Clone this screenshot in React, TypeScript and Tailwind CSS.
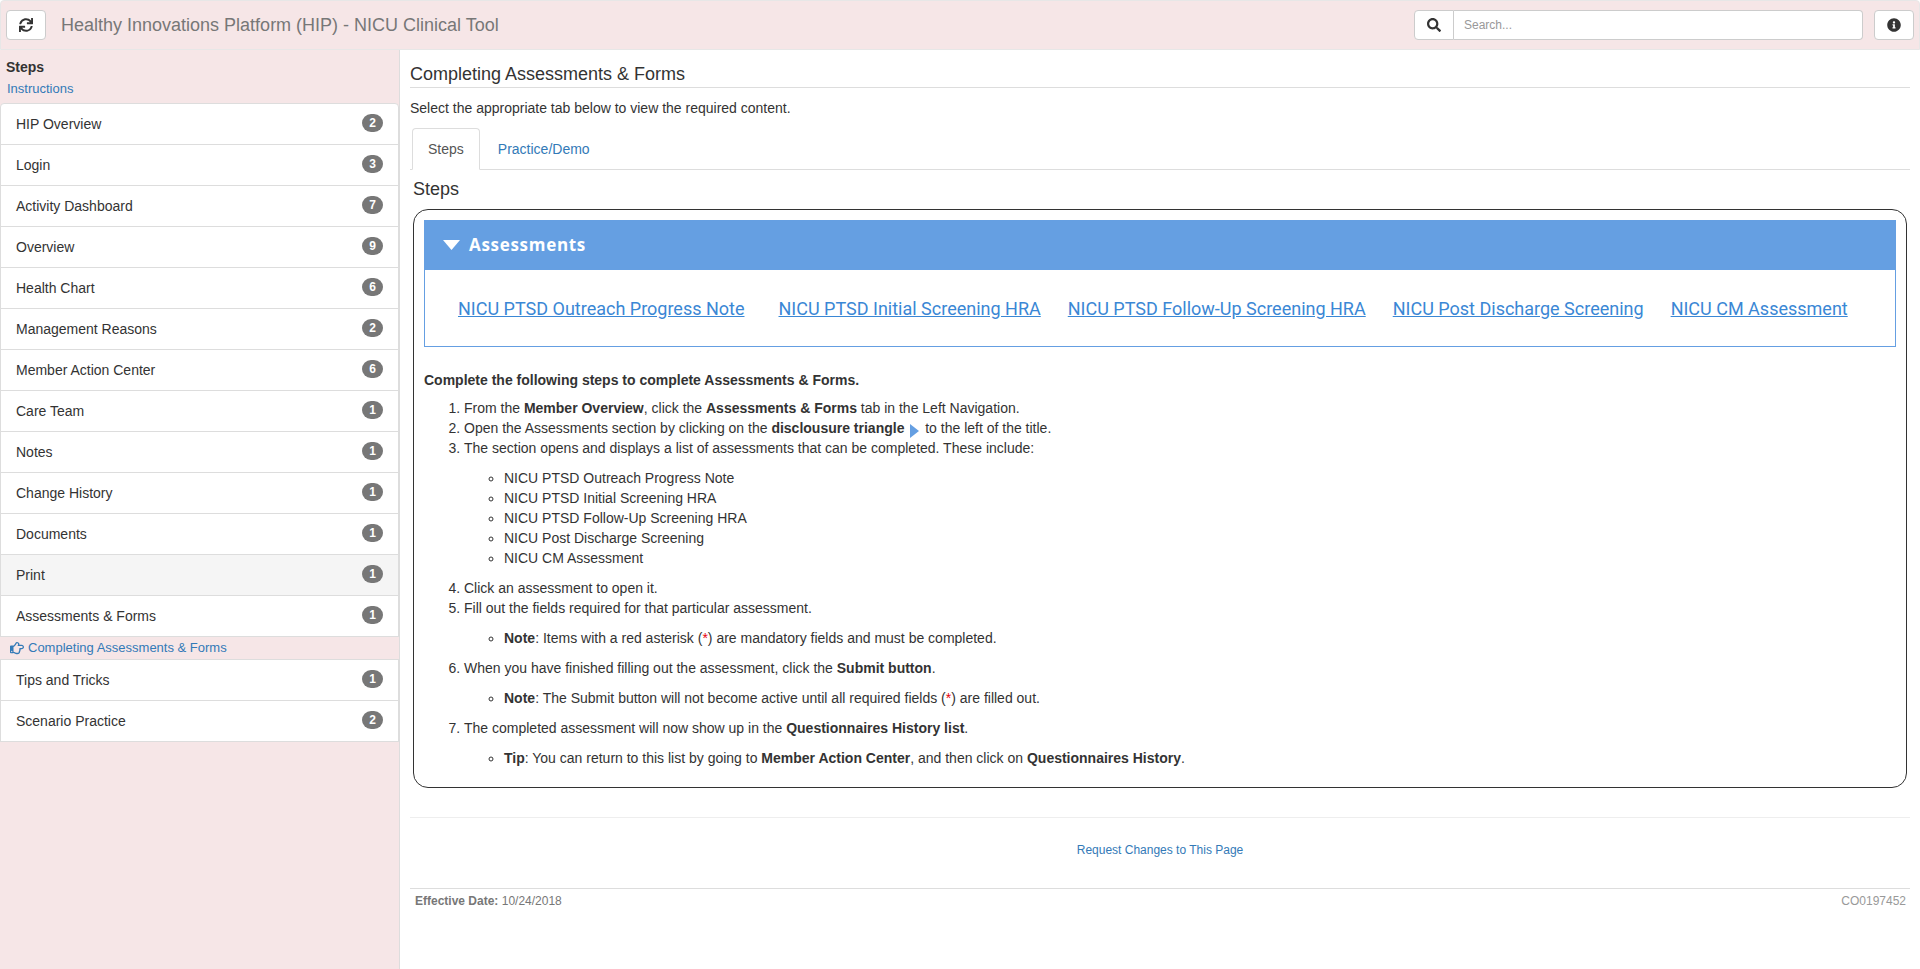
import React from "react";
import { FaSync, FaSearch, FaInfoCircle, FaRegHandPointRight } from "react-icons/fa";

const navItems: [string, number][] = [
  ["HIP Overview", 2],
  ["Login", 3],
  ["Activity Dashboard", 7],
  ["Overview", 9],
  ["Health Chart", 6],
  ["Management Reasons", 2],
  ["Member Action Center", 6],
  ["Care Team", 1],
  ["Notes", 1],
  ["Change History", 1],
  ["Documents", 1],
  ["Print", 1],
  ["Assessments & Forms", 1],
];

const assessmentLinks = [
  ["NICU PTSD Outreach Progress Note", "mr-[34px]"],
  ["NICU PTSD Initial Screening HRA", "mr-[27px]"],
  ["NICU PTSD Follow-Up Screening HRA", "mr-[27px]"],
  ["NICU Post Discharge Screening", "mr-[27px]"],
  ["NICU CM Assessment", ""],
];

const NavRow: React.FC<{ label: string; count: number; active?: boolean; first?: boolean }> = ({
  label,
  count,
  active,
  first,
}) => (
  <div
    className={`h-[42px] flex items-center justify-between pl-[15px] pr-[15px] border border-[#ddd] -mb-px ${active ? "bg-[#f5f5f5]" : "bg-white"} ${first ? "rounded-t" : ""}`}
  >
    <span className="text-[14px] text-[#333]">{label}</span>
    <span className="w-[21px] h-[18px] rounded-[10px] bg-[#777] text-white text-[12px] font-bold flex items-center justify-center -mt-0.5">
      {count}
    </span>
  </div>
);

const Asterisk = () => (
  <>
    (<span className="text-red-600">*</span>)
  </>
);

export default function App() {
  return (
    <div className="min-h-[969px] bg-white font-['Liberation_Sans',Arial,sans-serif] text-[14px] text-[#333] flex flex-col">
      <header className="h-[50px] shrink-0 bg-[#f6e6e7] border border-[#e7e7e7] flex items-center pl-[5px] pr-[5px] rounded-t">
        <button className="w-[40px] h-[30px] bg-white border border-[#ccc] rounded flex items-center justify-center text-[#333]">
          <FaSync className="w-[14px] h-[14px]" />
        </button>
        <span className="ml-[15px] text-[18px] text-[#777]">
          Healthy Innovations Platform (HIP) - NICU Clinical Tool
        </span>
        <div className="ml-auto flex items-center">
          <div className="w-[40px] h-[30px] bg-white border border-[#ccc] rounded-l flex items-center justify-center text-[#333]">
            <FaSearch className="w-[14px] h-[14px]" />
          </div>
          <div className="w-[409px] h-[30px] bg-white border border-l-0 border-[#ccc] rounded-r flex items-center pl-[10px] text-[12px] text-[#999]">
            Search...
          </div>
          <button className="ml-[11px] w-[40px] h-[30px] bg-white border border-[#ccc] rounded flex items-center justify-center text-[#333]">
            <FaInfoCircle className="w-[14px] h-[14px]" />
          </button>
        </div>
      </header>

      <div className="flex-1 flex">
        <aside className="w-[400px] shrink-0 bg-[#f6e6e7] border-r border-[#ddd]">
          <div className="h-[53px] pl-[6px] pt-[9px]">
            <div className="text-[14px] font-bold leading-[17px]">Steps</div>
            <div className="text-[13px] text-[#337ab7] leading-[17px] mt-1 ml-px">Instructions</div>
          </div>
          {navItems.map(([label, count], i) => (
            <NavRow key={label} label={label} count={count} active={label === "Print"} first={i === 0} />
          ))}
          <div className="h-[22px] mt-px pl-[10px] flex items-center gap-1 text-[13px] text-[#337ab7]">
            <FaRegHandPointRight className="w-[14px] h-[14px]" />
            Completing Assessments &amp; Forms
          </div>
          <NavRow label="Tips and Tricks" count={1} />
          <NavRow label="Scenario Practice" count={2} />
        </aside>

        <main className="flex-1 pl-[10px] pr-[10px] pt-[13px]">
          <h2 className="text-[18px] leading-[22px] pb-[1px] border-b border-[#ddd] h-[25px]">
            Completing Assessments &amp; Forms
          </h2>
          <p className="text-[14px] mt-[10px] leading-[20px]">
            Select the appropriate tab below to view the required content.
          </p>
          <div className="flex border-b border-[#ddd] h-[42px] mt-[10px] pl-[2px]">
            <div className="h-[42px] px-[15px] flex items-center bg-white border border-[#ddd] border-b-white rounded-t text-[#555]">
              Steps
            </div>
            <div className="h-[42px] px-[18px] flex items-center text-[#337ab7]">Practice/Demo</div>
          </div>
          <h3 className="text-[18px] leading-[20px] mt-[9px] ml-[3px]">Steps</h3>

          <div className="mt-[10px] ml-[3px] mr-[3px] border border-[#333] rounded-[15px] px-[10px] pt-[10px] pb-[9px]">
            <div className="border-x border-b border-[#659fe2]">
              <div className="h-[50px] bg-[#659fe2] flex items-center pl-[18px] pb-px text-white font-['Open_Sans',sans-serif] font-bold text-[17px] tracking-[0.7px]">
                <svg viewBox="0 0 17 10" className="w-[17px] h-[10px] mr-[9px]">
                  <path d="M0 0h17L8.5 10z" fill="#fff" />
                </svg>
                Assessments
              </div>
              <div className="h-[76px] flex items-center pl-[33px] font-['Roboto',sans-serif] text-[18px] text-[#3a87d5] whitespace-nowrap">
                {assessmentLinks.map(([text, gap]) => (
                  <span key={text} className={`underline ${gap}`}>
                    {text}
                  </span>
                ))}
              </div>
            </div>

            <p className="font-bold mt-[23px] leading-[20px]">
              Complete the following steps to complete Assessments &amp; Forms.
            </p>
            <ol className="list-decimal pl-[40px] mt-[8px] leading-[20px]">
              <li>
                From the <b>Member Overview</b>, click the <b>Assessments &amp; Forms</b> tab in the Left Navigation.
              </li>
              <li>
                Open the Assessments section by clicking on the <b>disclousure triangle</b>{" "}
                <svg viewBox="0 0 9 14" className="inline-block w-[9px] h-[14px] mx-[2px] -mb-[3px]">
                  <path d="M0 0l9 7-9 7z" fill="#659fe2" />
                </svg>{" "}
                to the left of the title.
              </li>
              <li>
                The section opens and displays a list of assessments that can be completed. These include:
                <ul className="list-[circle] pl-[40px] my-[10px]">
                  <li>NICU PTSD Outreach Progress Note</li>
                  <li>NICU PTSD Initial Screening HRA</li>
                  <li>NICU PTSD Follow-Up Screening HRA</li>
                  <li>NICU Post Discharge Screening</li>
                  <li>NICU CM Assessment</li>
                </ul>
              </li>
              <li>Click an assessment to open it.</li>
              <li>
                Fill out the fields required for that particular assessment.
                <ul className="list-[circle] pl-[40px] my-[10px]">
                  <li>
                    <b>Note</b>: Items with a red asterisk <Asterisk /> are mandatory fields and must be completed.
                  </li>
                </ul>
              </li>
              <li>
                When you have finished filling out the assessment, click the <b>Submit button</b>.
                <ul className="list-[circle] pl-[40px] my-[10px]">
                  <li>
                    <b>Note</b>: The Submit button will not become active until all required fields <Asterisk /> are
                    filled out.
                  </li>
                </ul>
              </li>
              <li>
                The completed assessment will now show up in the <b>Questionnaires History list</b>.
                <ul className="list-[circle] pl-[40px] my-[10px]">
                  <li>
                    <b>Tip</b>: You can return to this list by going to <b>Member Action Center</b>, and then click on{" "}
                    <b>Questionnaires History</b>.
                  </li>
                </ul>
              </li>
            </ol>
          </div>

          <div className="mt-[29px] border-t border-[#eee] h-[71px] pt-[23px] flex items-start justify-center text-[12px] text-[#337ab7]">
            Request Changes to This Page
          </div>
          <div className="border-t border-[#ddd] pt-[3px] pl-[5px] pr-[4px] flex justify-between text-[12px] text-[#777]">
            <span>
              <b>Effective Date:</b> 10/24/2018
            </span>
            <span className="text-[#999]">CO0197452</span>
          </div>
        </main>
      </div>
    </div>
  );
}
